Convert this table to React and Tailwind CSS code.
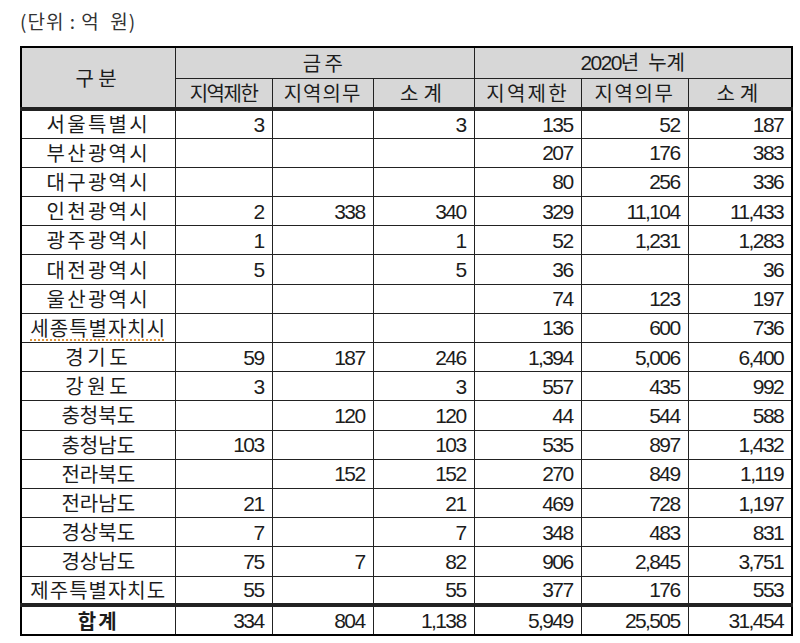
import React from 'react';

const rows = [
  ['서울특별시', '3', '', '3', '135', '52', '187'],
  ['부산광역시', '', '', '', '207', '176', '383'],
  ['대구광역시', '', '', '', '80', '256', '336'],
  ['인천광역시', '2', '338', '340', '329', '11,104', '11,433'],
  ['광주광역시', '1', '', '1', '52', '1,231', '1,283'],
  ['대전광역시', '5', '', '5', '36', '', '36'],
  ['울산광역시', '', '', '', '74', '123', '197'],
  ['세종특별자치시', '', '', '', '136', '600', '736'],
  ['경기도', '59', '187', '246', '1,394', '5,006', '6,400'],
  ['강원도', '3', '', '3', '557', '435', '992'],
  ['충청북도', '', '120', '120', '44', '544', '588'],
  ['충청남도', '103', '', '103', '535', '897', '1,432'],
  ['전라북도', '', '152', '152', '270', '849', '1,119'],
  ['전라남도', '21', '', '21', '469', '728', '1,197'],
  ['경상북도', '7', '', '7', '348', '483', '831'],
  ['경상남도', '75', '7', '82', '906', '2,845', '3,751'],
  ['제주특별자치도', '55', '', '55', '377', '176', '553'],
];

const total = ['합계', '334', '804', '1,138', '5,949', '25,505', '31,454'];

const ko = "font-['Noto_Sans_CJK_KR','Noto_Sans',sans-serif]";
const num = "font-['Liberation_Sans',Arial,sans-serif] text-[21px] tracking-[-1.6px]";
const line = 'border border-[#222]';

// letter spacing by label length, like the distributed cells in the source sheet
const spacing = {
  3: 'tracking-[3.6px]',
  4: 'tracking-[0px]',
  5: 'tracking-[2.3px]',
  7: 'tracking-[1px]',
};

function Label({ text }) {
  const mark = text === '세종특별자치시'
    ? ' underline decoration-dotted decoration-[#e0953a] decoration-2 underline-offset-[4px]'
    : '';
  return <span className={spacing[text.length] + mark}>{text}</span>;
}

export default function App() {
  return (
    <div className={`bg-white min-h-[643px] pt-[9px] pl-[20px] text-[#1c1c1c] ${ko}`}>
      <div className="h-[37px] text-[19px] leading-[24px] tracking-[1px] text-[#333] whitespace-pre">(단위 : 억  원)</div>
      <table className="table-fixed border-collapse w-[771px] border-2 border-black">
        <colgroup>
          <col className="w-[154px]" />
          <col className="w-[97px]" />
          <col className="w-[101px]" />
          <col className="w-[101px]" />
          <col className="w-[107px]" />
          <col className="w-[107px]" />
          <col className="w-[104px]" />
        </colgroup>
        <thead>
          <tr className="h-[31px] bg-[#d7d7d7] text-[20px] leading-none">
            <th rowSpan={2} className={`font-normal ${line} border-b-4 border-b-double text-center`}>
              <span className="tracking-[4.4px]">구분</span>
            </th>
            <th colSpan={3} className={`font-normal ${line} text-center`}>
              <span className="tracking-[3.4px]">금주</span>
            </th>
            <th colSpan={3} className={`font-normal ${line} text-center whitespace-pre`}>
              <span className={`${num} text-[20px] tracking-[-1.6px]`}>2020</span>년  누계
            </th>
          </tr>
          <tr className="h-[31px] bg-[#d7d7d7] text-[20px] leading-none">
            <th className={`font-normal ${line} border-b-4 border-b-double text-center`}>
              <span className="tracking-[-1.5px]">지역제한</span>
            </th>
            <th className={`font-normal ${line} border-b-4 border-b-double text-center`}>
              <span className="tracking-[1px]">지역의무</span>
            </th>
            <th className={`font-normal ${line} border-b-4 border-b-double text-center`}>
              <span className="tracking-[5px]">소계</span>
            </th>
            <th className={`font-normal ${line} border-b-4 border-b-double text-center`}>
              <span className="tracking-[2.2px]">지역제한</span>
            </th>
            <th className={`font-normal ${line} border-b-4 border-b-double text-center`}>
              <span className="tracking-[1.6px]">지역의무</span>
            </th>
            <th className={`font-normal ${line} border-b-4 border-b-double text-center`}>
              <span className="tracking-[5px]">소계</span>
            </th>
          </tr>
        </thead>
        <tbody>
          {rows.map((r) => (
            <tr key={r[0]} className="h-[29.2px]">
              <td className={`${line} text-center text-[20px] leading-none whitespace-nowrap`}>
                <Label text={r[0]} />
              </td>
              {r.slice(1).map((v, i) => (
                <td key={i} className={`${line} text-right pr-[8px] leading-none ${num}`}>
                  {v}
                </td>
              ))}
            </tr>
          ))}
          <tr className="h-[30px]">
            <td className={`${line} border-t-4 border-t-double text-center text-[20px] font-bold leading-none`}>
              <span className="tracking-[2px]">{total[0]}</span>
            </td>
            {total.slice(1).map((v, i) => (
              <td key={i} className={`${line} border-t-4 border-t-double text-right pr-[8px] leading-none ${num}`}>
                {v}
              </td>
            ))}
          </tr>
        </tbody>
      </table>
    </div>
  );
}
